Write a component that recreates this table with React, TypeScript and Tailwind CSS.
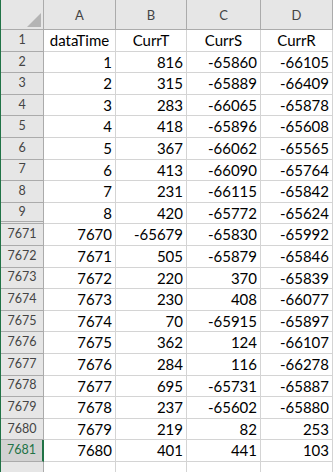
import React from "react";

const rows: [string, (string | number)[]][] = [
  ["1", ["dataTime", "CurrT", "CurrS", "CurrR"]],
  ["2", [1, 816, -65860, -66105]],
  ["3", [2, 315, -65889, -66409]],
  ["4", [3, 283, -66065, -65878]],
  ["5", [4, 418, -65896, -65608]],
  ["6", [5, 367, -66062, -65565]],
  ["7", [6, 413, -66090, -65764]],
  ["8", [7, 231, -66115, -65842]],
  ["9", [8, 420, -65772, -65624]],
  ["7671", [7670, -65679, -65830, -65992]],
  ["7672", [7671, 505, -65879, -65846]],
  ["7673", [7672, 220, 370, -65839]],
  ["7674", [7673, 230, 408, -66077]],
  ["7675", [7674, 70, -65915, -65897]],
  ["7676", [7675, 362, 124, -66107]],
  ["7677", [7676, 284, 116, -66278]],
  ["7678", [7677, 695, -65731, -65887]],
  ["7679", [7678, 237, -65602, -65880]],
  ["7680", [7679, 219, 82, 253]],
  ["7681", [7680, 401, 441, 103]],
];

const widths = ["w-[72px]", "w-[71px]", "w-[74px]", "w-[72px]"];
const font = { fontFamily: "Lato, 'Noto Sans', sans-serif" };

export default function App() {
  return (
    <div className="w-[333px] h-[472px] overflow-hidden bg-white border-l border-[#217346]" style={font}>
      {/* column header */}
      <div className="flex h-[30px]">
        <div className="w-[43px] shrink-0 bg-[#e6e6e6] border-r border-b border-[#ababab] flex items-end justify-end pr-[2px] pb-[2px]">
          <svg width="14" height="14" viewBox="0 0 14 14">
            <polygon points="14,0 14,14 0,14" fill="#b4b4b4" />
          </svg>
        </div>
        {["A", "B", "C", "D"].map((c, i) => (
          <div
            key={c}
            className={`${widths[i]} shrink-0 bg-[#e6e6e6] border-r border-b border-[#ababab] flex items-center justify-center text-[13px] text-[#444444] pt-[2px]`}
          >
            {c}
          </div>
        ))}
      </div>
      {rows.map(([h, cells], ri) => {
        const selected = h === "7681";
        const hidden = h === "9";
        return (
          <div key={h} className="flex h-[21.6px]">
            <div
              className={`w-[43px] shrink-0 flex items-center justify-center text-[12.5px] ${
                selected
                  ? "bg-[#d2d2d2] text-[#217346] border-r-2 border-r-[#217346] border-b border-b-[#ababab]"
                  : "bg-[#e6e6e6] text-[#444444] border-r border-b border-[#ababab]"
              } ${hidden ? "border-b-[3px] border-double" : ""}`}
            >
              {h}
            </div>
            {cells.map((v, ci) => (
              <div
                key={ci}
                className={`${widths[ci]} shrink-0 border-r border-b border-[#d4d4d4] flex items-center text-[15px] text-black ${
                  ri === 0 ? "justify-center" : "justify-end pr-[3px]"
                }`}
              >
                {v}
              </div>
            ))}
          </div>
        );
      })}
      <div className="flex h-[12px]">
        <div className="w-[43px] shrink-0 bg-[#e6e6e6] border-r border-[#ababab]" />
        {widths.map((w, i) => (
          <div key={i} className={`${w} shrink-0 border-r border-[#d4d4d4]`} />
        ))}
      </div>
    </div>
  );
}
